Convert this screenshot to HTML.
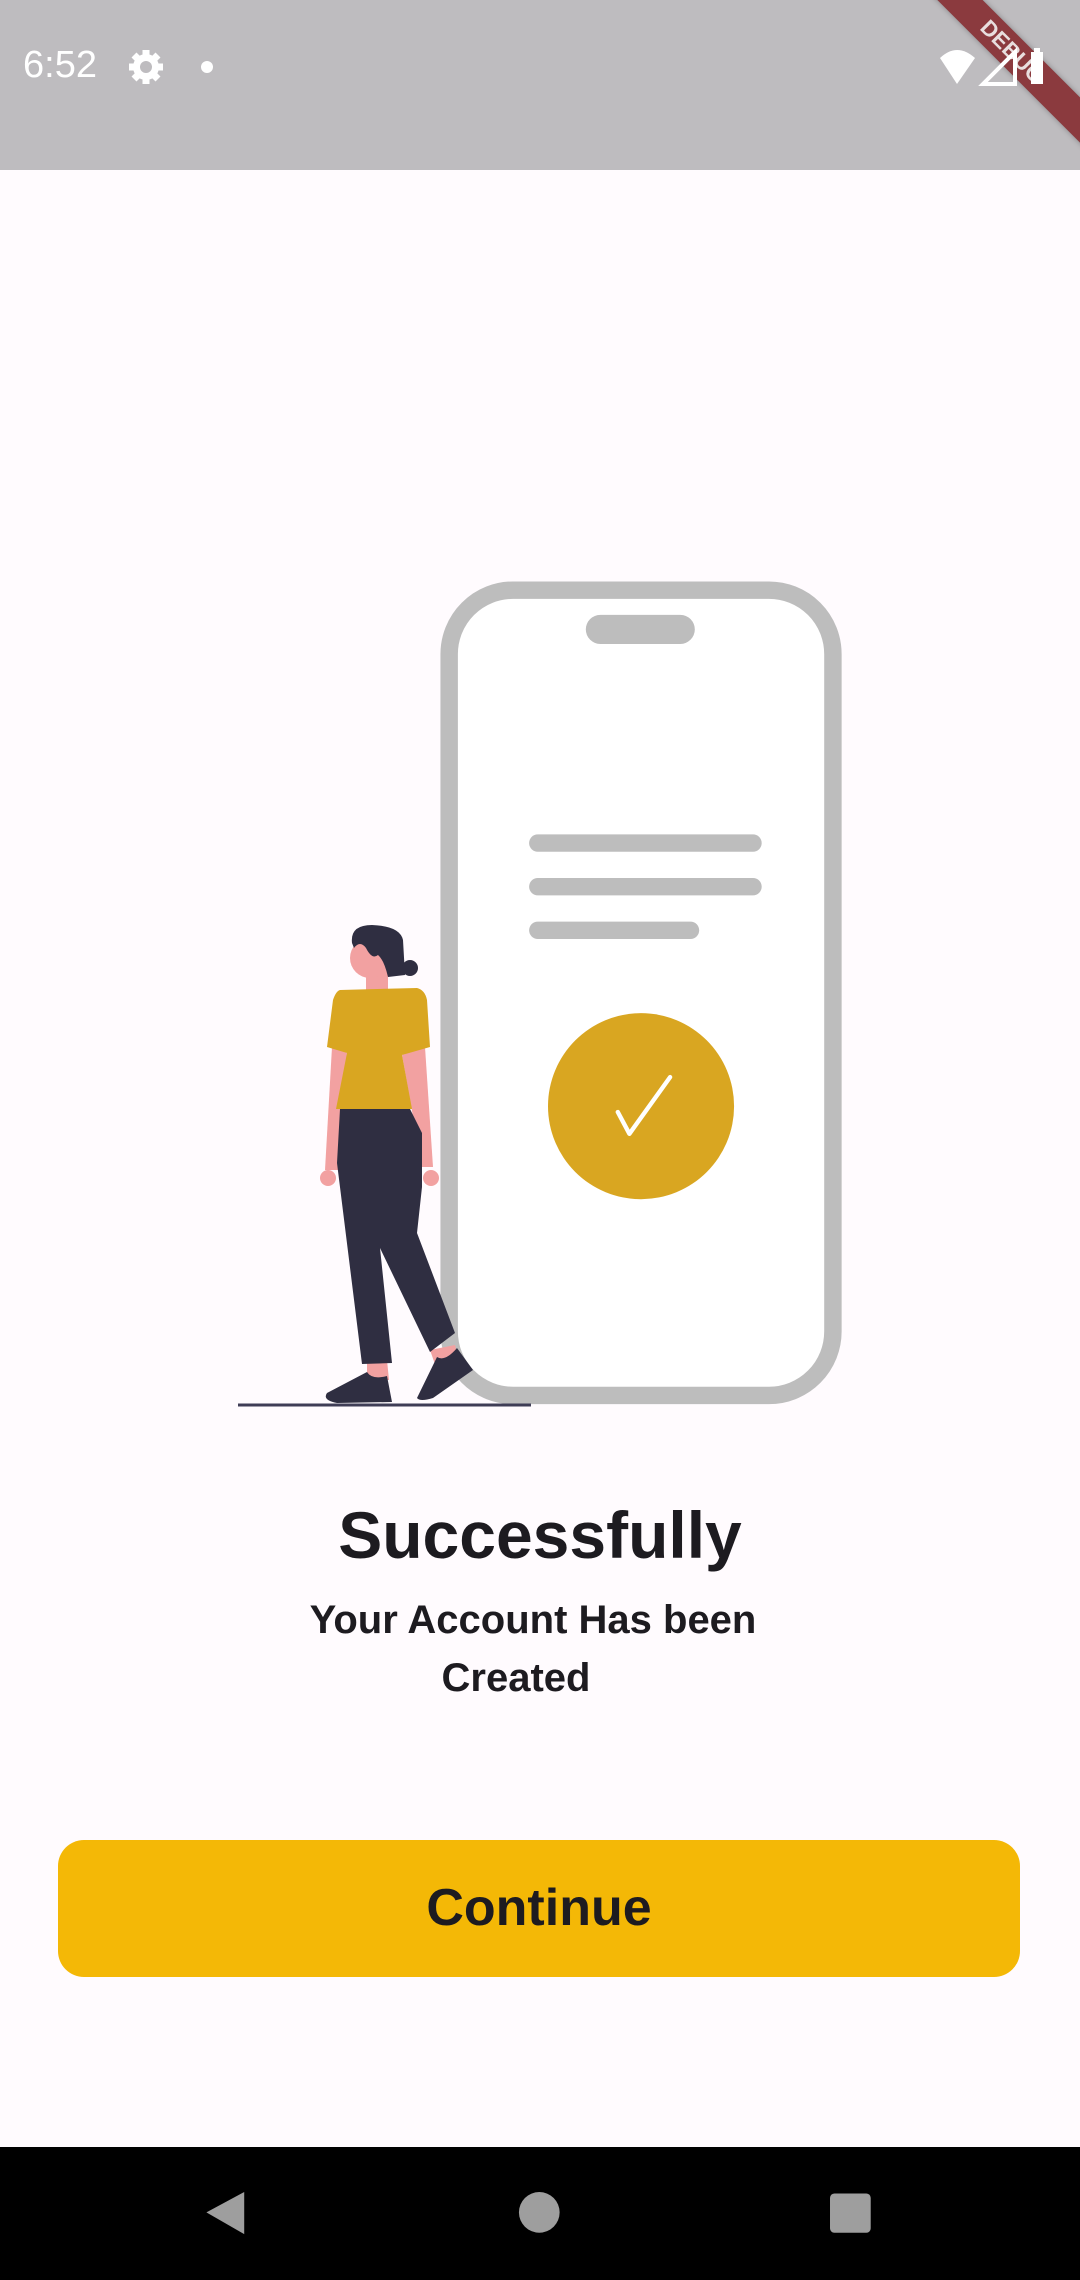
<!DOCTYPE html>
<html><head><meta charset="utf-8"><style>
html,body{margin:0;padding:0}
body{width:1080px;height:2280px;position:relative;overflow:hidden;background:#fffbfe;font-family:"Liberation Sans",Roboto,sans-serif}
.sb{position:absolute;left:0;top:0;width:1080px;height:170px;background:#bebcbf}
.t{position:absolute;color:#1d1b20;font-weight:bold;white-space:nowrap}
.btn{position:absolute;left:58px;top:1840px;width:962px;height:137px;background:#f4b806;border-radius:26px;text-align:center;line-height:137px;font-size:52px;font-weight:bold;color:#1d1b20}
.nav{position:absolute;left:0;top:2147px;width:1080px;height:133px;background:#000}
.dbg{position:absolute;right:-62px;top:36px;width:260px;height:32px;background:#8b3a3e;transform:rotate(45deg);color:#e8dede;font-size:22px;font-weight:bold;text-align:center;line-height:32px;box-shadow:0 0 6px rgba(0,0,0,.3)}
</style></head><body>
<div class="sb"></div>
<div class="dbg">DEBUG</div>
<div style="position:absolute;left:23px;top:44px;font-size:38px;color:#fff">6:52</div>
<svg style="position:absolute;left:0;top:0" width="1080" height="170">
<g transform="translate(146,67)" fill="#fff"><circle r="13"/><g stroke="#fff" stroke-width="7"><line x1="0" y1="-17" x2="0" y2="17"/><line x1="-17" y1="0" x2="17" y2="0"/><line x1="-12" y1="-12" x2="12" y2="12"/><line x1="-12" y1="12" x2="12" y2="-12"/></g><circle r="6" fill="#bebcbf"/></g>
<circle cx="207" cy="67" r="6" fill="#fff"/>
<path d="M940,58 Q957,42 975,58 L957,84 Z" fill="#fff"/>
<path d="M1015,52 L1015,84 L983,84 Z" fill="none" stroke="#fff" stroke-width="4"/>
<rect x="1031" y="52" width="12" height="32" fill="#fff"/><rect x="1034" y="48" width="6" height="5" fill="#fff"/>
</svg>

<svg style="position:absolute;left:0;top:0" width="1080" height="2280" viewBox="0 0 1080 2280">
<g transform="scale(1.4536)">
<rect x="309" y="406" width="264" height="554" rx="44" fill="#fff" stroke="#bdbdbd" stroke-width="12"/>
<rect x="403" y="423" width="75" height="20" rx="10" fill="#bdbdbd"/>
<rect x="364" y="574" width="160" height="12" rx="6" fill="#bdbdbd"/>
<rect x="364" y="604" width="160" height="12" rx="6" fill="#bdbdbd"/>
<rect x="364" y="634" width="117" height="12" rx="6" fill="#bdbdbd"/>
<circle cx="441" cy="761" r="64" fill="#d9a621"/>
<path d="M425,765 L433,780 L461,741" fill="none" stroke="#fff" stroke-width="3" stroke-linecap="round" stroke-linejoin="round"/>
</g>
<line x1="238" y1="1405" x2="531" y2="1405" stroke="#3f3d56" stroke-width="3"/>
<rect x="366" y="970" width="22" height="22" fill="#f2a1a1"/>
<circle cx="370" cy="958" r="20" fill="#f2a1a1"/>
<path d="M352,943 Q350,925 372,925 Q400,926 403,940 L405,975 L388,977 Q384,960 378,955 Q372,960 366,948 Q360,940 354,948 Z" fill="#2f2e41"/>
<circle cx="410" cy="968" r="8" fill="#2f2e41"/>
<path d="M332,1047 L347,1053 L338,1170 L325,1170 Z" fill="#f2a1a1"/><circle cx="328" cy="1178" r="8" fill="#f2a1a1"/>
<path d="M402,1055 L425,1047 L433,1167 L422,1167 Z" fill="#f2a1a1"/><circle cx="431" cy="1178" r="8" fill="#f2a1a1"/>
<path d="M340,990 L417,988 Q425,990 427,1000 L430,1047 L402,1055 L412,1109 L336,1109 L347,1053 L327,1047 L333,1000 Q336,991 340,990 Z" fill="#d9a621"/>
<path d="M367,1360 L387,1360 L389,1380 L367,1380 Z" fill="#f2a1a1"/>
<path d="M430,1350 L455,1345 L460,1365 L437,1370 Z" fill="#f2a1a1"/>
<path d="M340,1109 L410,1109 L422,1133 L422,1187 L417,1233 L455,1333 L430,1352 L380,1248 L392,1363 L362,1364 L337,1163 Z" fill="#2f2e41"/>
<path d="M327,1393 L367,1372 Q372,1380 387,1376 L392,1402 L337,1403 Q322,1400 327,1393 Z" fill="#2f2e41"/>
<path d="M417,1398 L437,1357 Q445,1362 457,1348 L473,1370 L433,1398 Q420,1402 417,1398 Z" fill="#2f2e41"/>
</svg>

<div class="t" style="left:0;width:1080px;text-align:center;top:1497px;font-size:66px">Successfully</div>
<div class="t" style="left:0;width:1066px;text-align:center;top:1598px;font-size:40px">Your Account Has been</div>
<div class="t" style="left:0;width:1032px;text-align:center;top:1656px;font-size:40px">Created</div>

<div class="btn">Continue</div>

<div class="nav"></div>
<svg style="position:absolute;left:0;top:0" width="1080" height="2280" viewBox="0 0 1080 2280">
<g transform="scale(1.4536)" fill="#9e9e9e">
<path d="M142,1522 L168,1508 L168,1537 Z"/>
<circle cx="371" cy="1522" r="14"/>
<rect x="571" y="1509" width="28" height="27" rx="3"/>
</g>
</svg>
</body></html>
